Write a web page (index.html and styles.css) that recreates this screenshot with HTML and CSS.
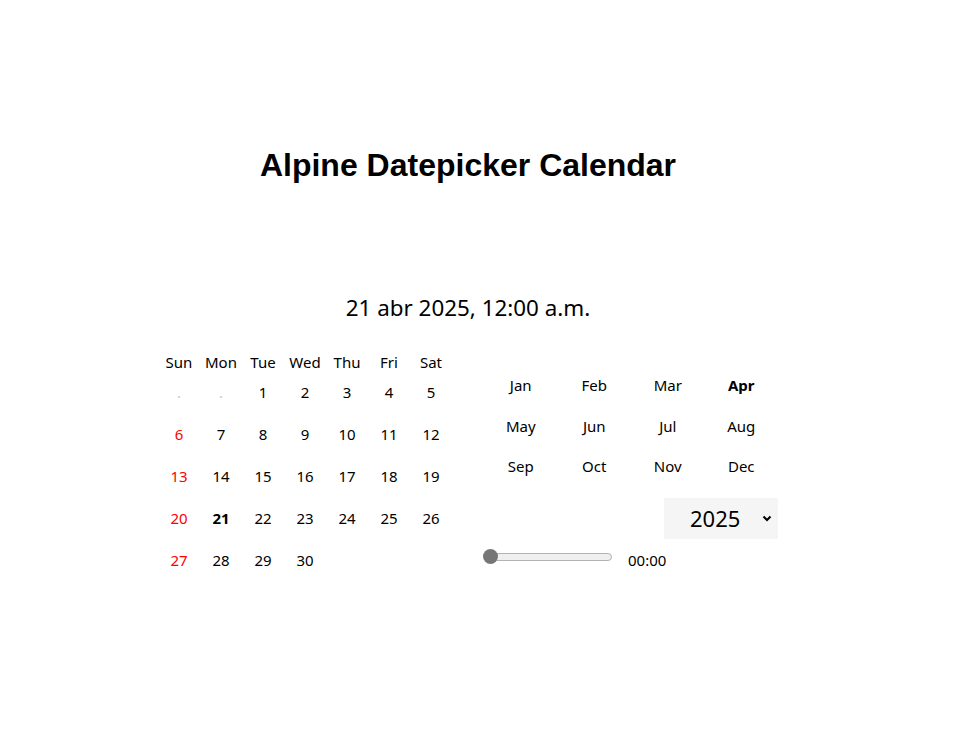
FILE: index.html
```html
<!DOCTYPE html>
<html lang="es">
<head>
<meta charset="utf-8">
<title>Alpine Datepicker Calendar</title>
<link rel="stylesheet" href="styles.css">
</head>
<body>
<div class="page">
  <h1 class="title">Alpine Datepicker Calendar</h1>
  <p class="selected">21 abr 2025, 12:00 a.m.</p>
  <div class="picker">
    <div class="days">
      <div class="dow">Sun</div><div class="dow">Mon</div><div class="dow">Tue</div><div class="dow">Wed</div><div class="dow">Thu</div><div class="dow">Fri</div><div class="dow">Sat</div>
      <div class="day blank">.</div><div class="day blank">.</div><div class="day">1</div><div class="day">2</div><div class="day">3</div><div class="day">4</div><div class="day">5</div>
      <div class="day sun">6</div><div class="day">7</div><div class="day">8</div><div class="day">9</div><div class="day">10</div><div class="day">11</div><div class="day">12</div>
      <div class="day sun">13</div><div class="day">14</div><div class="day">15</div><div class="day">16</div><div class="day">17</div><div class="day">18</div><div class="day">19</div>
      <div class="day sun">20</div><div class="day current">21</div><div class="day">22</div><div class="day">23</div><div class="day">24</div><div class="day">25</div><div class="day">26</div>
      <div class="day sun">27</div><div class="day">28</div><div class="day">29</div><div class="day">30</div>
    </div>
    <div class="side">
      <div class="months">
        <div class="month">Jan</div><div class="month">Feb</div><div class="month">Mar</div><div class="month current">Apr</div>
        <div class="month">May</div><div class="month">Jun</div><div class="month">Jul</div><div class="month">Aug</div>
        <div class="month">Sep</div><div class="month">Oct</div><div class="month">Nov</div><div class="month">Dec</div>
      </div>
      <div class="year-row">
        <div class="year-box">
          <select class="year-select">
            <option>2023</option><option>2024</option><option selected>2025</option><option>2026</option>
          </select>
          <svg class="chev" width="10" height="7" viewBox="0 0 10 7"><path d="M1.5 1.5 L5 5 L8.5 1.5" fill="none" stroke="#000" stroke-width="2"/></svg>
        </div>
      </div>
      <div class="time-row">
        <div class="slider"><div class="thumb"></div></div>
        <span class="time">00:00</span>
      </div>
    </div>
  </div>
</div>
</body>
</html>
```
FILE: styles.css
```css
* { box-sizing: border-box; }
html, body { margin: 0; padding: 0; background: #fff; }
body {
  font-family: "Segoe UI", "Noto Sans", "Open Sans", sans-serif;
  color: #000;
}
.page {
  width: 936px;
  display: flex;
  flex-direction: column;
  align-items: center;
}
.title {
  margin: 147px 0 0;
  font-family: "Liberation Sans", Arial, sans-serif;
  font-size: 32px;
  font-weight: bold;
  line-height: 37px;
}
.selected {
  margin: 109px 0 0;
  font-size: 22.4px;
  line-height: 30px;
}
.picker {
  margin-top: 30px;
  display: flex;
  gap: 32px;
}
.days {
  display: grid;
  grid-template-columns: repeat(7, 42px);
  grid-auto-rows: 42px;
  grid-template-rows: 18px;
  font-size: 15px;
}
.dow {
  text-align: center;
  line-height: 18px;
}
.day {
  display: flex;
  align-items: center;
  justify-content: center;
}
.day.blank { color: #c8c8c8; }
.day.sun { color: #ff0000; }
.day.current { font-weight: bold; }
.side {
  width: 294px;
  padding-top: 12px;
  display: flex;
  flex-direction: column;
}
.months {
  display: grid;
  grid-template-columns: repeat(4, 1fr);
  grid-auto-rows: 40.5px;
  font-size: 15px;
}
.month {
  display: flex;
  align-items: center;
  justify-content: center;
}
.month.current { font-weight: bold; }
.year-row {
  margin-top: 11px;
  display: flex;
  justify-content: flex-end;
}
.year-box {
  position: relative;
  width: 114px;
  height: 41px;
}
.year-select {
  appearance: none;
  -webkit-appearance: none;
  width: 100%;
  height: 100%;
  border: none;
  background: #f5f5f5;
  font-family: inherit;
  font-size: 22px;
  color: #000;
  padding: 0 0 0 26px;
  outline: none;
}
.chev {
  position: absolute;
  right: 6px;
  top: 17px;
  pointer-events: none;
}
.time-row {
  margin-top: 9px;
  display: flex;
  align-items: center;
  gap: 16px;
  height: 24px;
}
.slider {
  position: relative;
  width: 128px;
  height: 8px;
  margin-bottom: 5px;
  border: 1px solid #b2b2b2;
  border-radius: 4px;
  background: #efefef;
}
.thumb {
  position: absolute;
  left: -2px;
  top: -5px;
  width: 15px;
  height: 15px;
  border-radius: 50%;
  background: #767676;
}
.time {
  font-size: 15px;
}
```
